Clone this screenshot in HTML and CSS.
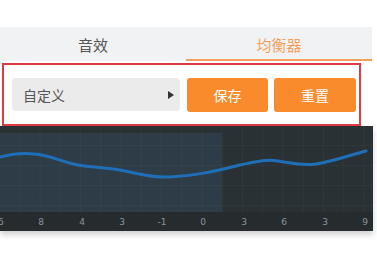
FILE: index.html
```html
<!DOCTYPE html>
<html lang="zh">
<head>
<meta charset="utf-8">
<link rel="stylesheet" href="styles.css">
</head>
<body>
<div class="page">
  <div class="tabs">
    <div class="tab">音效</div>
    <div class="tab active">均衡器</div>
  </div>
  <div class="panel">
    <div class="select"><span>自定义</span><span class="arrow"></span></div>
    <button class="btn save">保存</button>
    <button class="btn reset">重置</button>
  </div>
  <div class="graph">
    <svg class="chart" width="373" height="105" viewBox="0 0 373 105">
      <defs>
        <pattern id="grid" width="20.25" height="20" patternUnits="userSpaceOnUse">
          <path d="M20.25 0V20M0 20H20.25" stroke="#ffffff" stroke-opacity="0.05" stroke-width="1" fill="none"/>
        </pattern>
      </defs>
      <rect x="0" y="0" width="373" height="105" fill="#2a3135"/>
      <rect x="0" y="7" width="222" height="84" fill="#2d3c46"/>
      <rect x="0" y="0" width="373" height="86" fill="url(#grid)"/>
      <rect x="0" y="86" width="373" height="19" fill="#262b2e"/>
      <path d="M0 31 C12 28,24 27,34 28 C50 29,62 36,78 39 C95 42,108 41,125 45 C140 48,152 52,170 51 C195 50,215 45,240 39 C255 36,265 33,278 35 C292 37,300 40,316 38 C335 35,350 29,366 25" fill="none" stroke="#1f6fb8" stroke-width="3" stroke-linecap="round"/>
      <g class="lbl">
        <text x="1" y="99">5</text>
        <text x="41" y="99">8</text>
        <text x="82" y="99">4</text>
        <text x="122" y="99">3</text>
        <text x="162" y="99">-1</text>
        <text x="203" y="99">0</text>
        <text x="244" y="99">3</text>
        <text x="284" y="99">6</text>
        <text x="325" y="99">3</text>
        <text x="365" y="99">9</text>
      </g>
    </svg>
  </div>
</div>
</body>
</html>
```
FILE: styles.css
```css
html, body {
  margin: 0;
  padding: 0;
  background: #ffffff;
}
.page {
  width: 377px;
  height: 261px;
  padding-top: 27px;
  box-sizing: border-box;
  font-family: "Noto Sans CJK SC", "Noto Sans", sans-serif;
}
.tabs {
  display: flex;
  width: 372px;
  height: 34px;
  background: #f1f2f3;
}
.tab {
  flex: 1;
  display: flex;
  align-items: center;
  justify-content: center;
  font-size: 15px;
  color: #555555;
  box-sizing: border-box;
}
.tab.active {
  color: #f4a05a;
  border-bottom: 2px solid #f4a05a;
  padding-top: 2px;
}
.panel {
  margin: 2px 0 0 2px;
  width: 359px;
  height: 63px;
  box-sizing: border-box;
  border: 2px solid #e23a44;
  display: flex;
  align-items: center;
  padding: 0 0 0 8px;
}
.select {
  width: 168px;
  height: 33px;
  background: #ebebeb;
  border-radius: 4px;
  display: flex;
  align-items: center;
  justify-content: space-between;
  padding: 0 6px 0 11px;
  box-sizing: border-box;
  font-size: 14px;
  color: #555555;
}
.arrow {
  width: 0;
  height: 0;
  border-top: 4.5px solid transparent;
  border-bottom: 4.5px solid transparent;
  border-left: 6px solid #333333;
}
.btn {
  height: 34px;
  border: none;
  border-radius: 3px;
  background: #f98b2c;
  color: #ffffff;
  font-family: inherit;
  font-size: 14px;
  padding: 0;
}
.save {
  width: 81px;
  margin-left: 7px;
}
.reset {
  width: 82px;
  margin-left: 6px;
}
.graph {
  width: 373px;
  height: 105px;
  box-shadow: 0 4px 6px rgba(0, 0, 0, 0.18);
}
.chart {
  display: block;
}
.lbl text {
  font-family: "DejaVu Sans", sans-serif;
  font-size: 9px;
  fill: #8d949a;
  text-anchor: middle;
}
```
